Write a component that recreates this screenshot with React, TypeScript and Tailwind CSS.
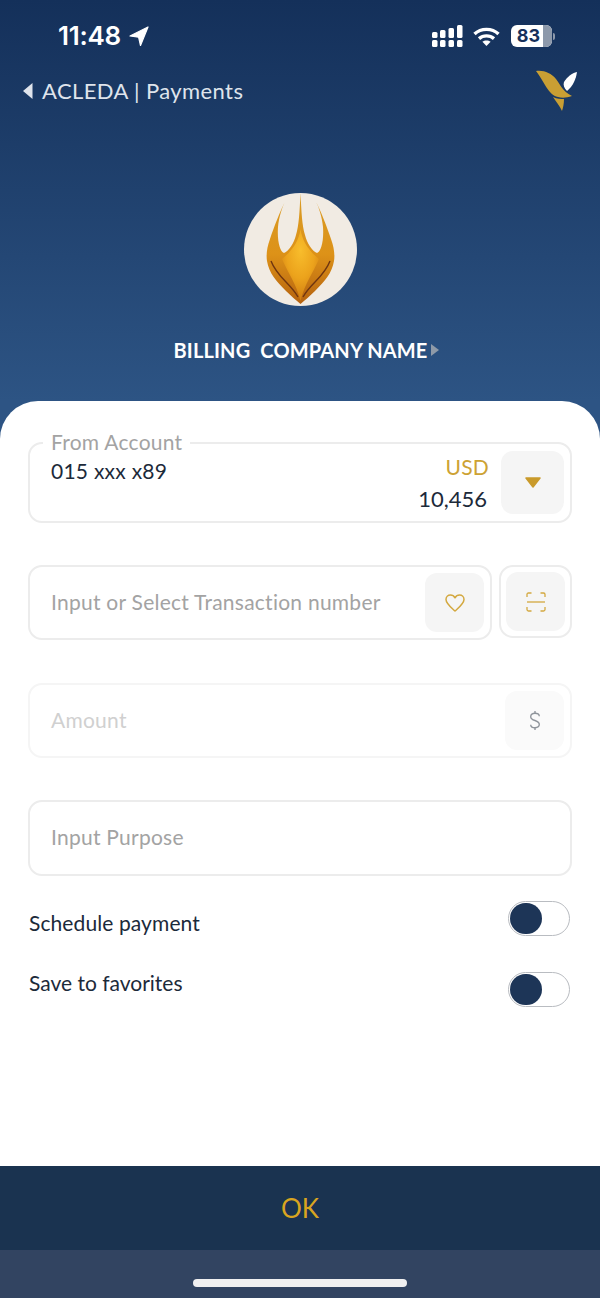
const font = "font-['Lato','Noto_Sans',sans-serif]";
const body = "text-[21px] tracking-[0.25px]";

const StatusBar = () => (
  <div className="flex h-[71px] items-start justify-between pl-[58px] pr-[45px] pt-[21px]">
    <div className="flex items-center gap-[8px]">
      <span className="font-['Inter',sans-serif] text-[26px] font-semibold leading-[30px] tracking-[-0.3px] text-white">11:48</span>
      <svg width="20" height="21" viewBox="0 0 20 21">
        <path d="M19 1 L11.5 19.5 L9.6 11.2 L1 10 Z" fill="#fff" stroke="#fff" strokeWidth="1.2" strokeLinejoin="round" />
      </svg>
    </div>
    <div className="flex items-center gap-[10px] pt-[4px]">
      <svg width="31" height="22" viewBox="0 0 31 22" fill="#fff">
        <rect x="0" y="7" width="5.5" height="6" rx="1.5" />
        <rect x="0" y="15" width="5.5" height="7" rx="1.5" />
        <rect x="8" y="5" width="5.5" height="8" rx="1.5" />
        <rect x="8" y="15" width="5.5" height="7" rx="1.5" />
        <rect x="16.5" y="3" width="5.5" height="10" rx="1.5" />
        <rect x="16.5" y="15" width="5.5" height="7" rx="1.5" />
        <rect x="25" y="0" width="5.5" height="13" rx="1.5" />
        <rect x="25" y="15" width="5.5" height="7" rx="1.5" />
      </svg>
      <svg width="27" height="19" viewBox="0 0 27 19" fill="none" stroke="#fff" strokeWidth="3.4">
        <path d="M1.5 7 C8 0.8 19 0.8 25.5 7" />
        <path d="M6 11.6 C10.2 8 16.8 8 21 11.6" />
        <path d="M13.5 19 L9.4 14.8 C11.6 13 15.4 13 17.6 14.8 Z" fill="#fff" stroke="none" />
      </svg>
      <div className="ml-[1px] flex items-center">
        <div className="flex h-[22px] w-[41px] items-center overflow-hidden rounded-[6px] bg-white">
          <span className="w-[32px] pl-[3px] text-center font-['Inter',sans-serif] text-[18px] font-bold leading-none text-[#16305a]">83</span>
          <div className="h-full flex-1 bg-[#8d99ab]" />
        </div>
        <div className="ml-[1px] h-[7px] w-[2px] rounded-r-sm bg-[#8d99ab]" />
      </div>
    </div>
  </div>
);

const NavBar = () => (
  <div className="flex h-[40px] items-center justify-between pl-[23px] pr-[22px]">
    <div className={`flex items-center gap-[9px] text-[22px] leading-none tracking-[0.4px] text-[#dfe4ec] ${font}`}>
      <svg width="10" height="16" viewBox="0 0 10 16"><path d="M9.5 0 V16 L0 8 Z" fill="#dfe4ec" /></svg>
      <span>ACLEDA | Payments</span>
    </div>
    <svg width="42" height="44" viewBox="0 0 42 44">
      <path d="M0 2 C8 1 15 4 20 10 C24 15 26 22 36 27 C30 29 26 29 22 28 C12 26 8 12 0 2 Z" fill="#c99f33" />
      <path d="M17 28 C21 30 25 30 28 30 C28 35 27 39 26 42 C24 37 20 33 17 28 Z" fill="#c99f33" />
      <path d="M41 3 C40 10 37 17 31 22 C28 19 27 16 28 13 C31 8 36 4 41 3 Z" fill="#fff" />
    </svg>
  </div>
);

const CompanyLogo = () => (
  <div className="flex h-[113px] w-[113px] items-center justify-center rounded-full bg-[#f1ebe3]">
    <svg width="113" height="113" viewBox="0 0 113 113">
      <defs>
        <linearGradient id="flame" x1="0" y1="0" x2="0" y2="1">
          <stop offset="0" stopColor="#d99c26" />
          <stop offset="0.55" stopColor="#dd9218" />
          <stop offset="1" stopColor="#b5620f" />
        </linearGradient>
        <radialGradient id="core" cx="0.5" cy="0.3" r="0.7">
          <stop offset="0" stopColor="#f8bd2c" />
          <stop offset="0.55" stopColor="#eca31c" />
          <stop offset="1" stopColor="#cf7c12" />
        </radialGradient>
      </defs>
      <path
        d="M56.5 0 C55.5 20 55 32 52 42 C50 50 45 58 40 60 C36 59 33 48 34 34 C35 24 38 14 42 7 C36 18 30 34 26 46 C23 54 22 62 23 68 C25 80 32 88 42 98 C47 103 52 107 56.5 111 C61 107 66 103 71 98 C81 88 88 80 90 68 C91 62 90 54 87 46 C83 34 77 18 71 7 C75 14 78 24 79 34 C80 48 77 59 73 60 C68 58 63 50 61 42 C58 32 57.5 20 56.5 0 Z"
        fill="url(#flame)"
      />
      <path d="M56.5 36 C55 48 48 58 38 66 C44 80 52 90 56.5 108 C61 90 69 80 75 66 C65 58 58 48 56.5 36 Z" fill="url(#core)" />
      <path d="M27 68 C33 84 46 90 54 104" fill="none" stroke="#6f3510" strokeWidth="1.4" />
      <path d="M86 68 C80 84 67 90 59 104" fill="none" stroke="#6f3510" strokeWidth="1.4" />
    </svg>
  </div>
);

const SideBox = ({ children, className = "" }: { children: React.ReactNode; className?: string }) => (
  <div className={`flex items-center justify-center rounded-[12px] ${className}`}>{children}</div>
);

const HeartIcon = () => (
  <svg width="20" height="18" viewBox="0 0 20 18" fill="none" stroke="#d3a83f" strokeWidth="1.5" strokeLinejoin="round">
    <path d="M10 17 C5 12.5 1 9.5 1 5.5 C1 2.8 3 1 5.4 1 C7.3 1 9 2 10 3.8 C11 2 12.7 1 14.6 1 C17 1 19 2.8 19 5.5 C19 9.5 15 12.5 10 17 Z" />
  </svg>
);

const ScanIcon = () => (
  <svg width="20" height="20" viewBox="0 0 20 20" fill="none" stroke="#d3a83f" strokeWidth="1.3">
    <path d="M1 5 V2.5 Q1 1 2.5 1 H5.5" />
    <path d="M14.5 1 H17.5 Q19 1 19 2.5 V5" />
    <path d="M1 15 V17.5 Q1 19 2.5 19 H5.5" />
    <path d="M14.5 19 H17.5 Q19 19 19 17.5 V15" />
    <path d="M1 10 H19" />
  </svg>
);

const DollarIcon = () => (
  <svg width="12" height="21" viewBox="0 0 14 24" fill="none" stroke="#8f949b" strokeWidth="1.6">
    <path d="M12 7 C12 4.5 10 3.5 7 3.5 C4 3.5 2 5 2 7.5 C2 10 4 11 7 12 C10 13 12 14 12 16.5 C12 19 10 20.5 7 20.5 C4 20.5 2 19.5 2 17" />
    <path d="M7 1 V3.5 M7 20.5 V23" />
  </svg>
);

const Toggle = () => (
  <div className="flex h-[35px] w-[62px] items-center rounded-full border-[1.5px] border-[#b9bcc1] bg-white pl-[1px]">
    <div className="h-[31px] w-[32px] rounded-full bg-[#1d3557]" />
  </div>
);

export default function App() {
  return (
    <div className={`flex h-[1298px] w-[600px] flex-col overflow-hidden bg-[linear-gradient(180deg,#14305a_0px,#2d5484_401px)] ${font}`}>
      <StatusBar />
      <NavBar />
      <div className="flex h-[290px] flex-col items-center pt-[82px]">
        <CompanyLogo />
        <div className="mt-[32px] flex items-center gap-[4px] pl-[13px] text-[20px] font-bold leading-[24px] tracking-[0.15px] text-white">
          <span className="whitespace-pre">BILLING  COMPANY NAME</span>
          <svg width="8" height="12" viewBox="0 0 8 12"><path d="M0 0 L8 6 L0 12 Z" fill="#8f9aa8" /></svg>
        </div>
      </div>

      <div className="flex flex-1 flex-col rounded-t-[38px] bg-white">
        <div className={`flex-1 px-[28px] pt-[30px] ${body}`}>
          <fieldset className="h-[92px] rounded-[14px] border-2 border-[#ececec] pl-[13px] pr-[6px]">
            <legend className="px-[8px] leading-[24px] text-[#a3a3a3]">
              <span className="inline-block -translate-y-[1px]">From Account</span>
            </legend>
            <div className="flex items-start justify-between">
              <span className="pl-[8px] pt-[4px] leading-[24px] text-[#1c2a3a]">015 xxx x89</span>
              <div className="flex items-start gap-[12px]">
                <div className="flex flex-col items-end">
                  <span className="leading-[24px] text-[#cda233]">USD</span>
                  <span className="mt-[7px] pr-[2px] text-[22px] leading-[26px] tracking-normal text-[#1c2a3a]">10,456</span>
                </div>
                <SideBox className="-mt-[4px] h-[63px] w-[63px] bg-[#f5f5f5]">
                  <svg width="16" height="11" viewBox="0 0 16 11"><path d="M1 1 H15 L8 10 Z" fill="#c99a2b" stroke="#c99a2b" strokeWidth="1.5" strokeLinejoin="round" /></svg>
                </SideBox>
              </div>
            </div>
          </fieldset>

          <div className="mt-[42px] flex items-start gap-[7px]">
            <div className="flex h-[75px] flex-1 items-center justify-between rounded-[14px] border-2 border-[#ececec] pl-[21px] pr-[6px]">
              <span className="pb-[2px] text-[#a3a3a3]">Input or Select Transaction number</span>
              <SideBox className="h-[59px] w-[59px] bg-[#f5f5f5]">
                <HeartIcon />
              </SideBox>
            </div>
            <div className="flex h-[73px] w-[73px] items-center justify-center rounded-[14px] border-2 border-[#ececec]">
              <SideBox className="h-[59px] w-[59px] bg-[#f5f5f5]">
                <ScanIcon />
              </SideBox>
            </div>
          </div>

          <div className="mt-[43px] flex h-[75px] items-center justify-between rounded-[14px] border-2 border-[#f5f5f5] pl-[21px] pr-[6px]">
            <span className="pb-[2px] text-[#d0d0d0]">Amount</span>
            <SideBox className="h-[59px] w-[59px] bg-[#fafafa]">
              <DollarIcon />
            </SideBox>
          </div>

          <div className="mt-[42px] flex h-[76px] items-center rounded-[14px] border-2 border-[#ececec] pl-[21px]">
            <span className="pb-[2px] text-[#a3a3a3]">Input Purpose</span>
          </div>

          <div className="mt-[25px] flex items-center justify-between pl-[1px] pr-[2px]">
            <span className="mt-[9px] leading-[24px] tracking-[0.1px] text-[#1c2a3a]">Schedule payment</span>
            <Toggle />
          </div>
          <div className="mt-[36px] flex items-center justify-between pl-[1px] pr-[2px]">
            <span className="-mt-[14px] leading-[24px] tracking-normal text-[#1c2a3a]">Save to favorites</span>
            <Toggle />
          </div>
        </div>

        <div className="flex h-[84px] items-center justify-center bg-[#1a3350] text-[26px] text-[#d9a520]">OK</div>
        <div className="flex h-[48px] items-start justify-center bg-[#324461] pt-[29px]">
          <div className="h-[8px] w-[214px] rounded-full bg-[#f0f0f0]" />
        </div>
      </div>
    </div>
  );
}
